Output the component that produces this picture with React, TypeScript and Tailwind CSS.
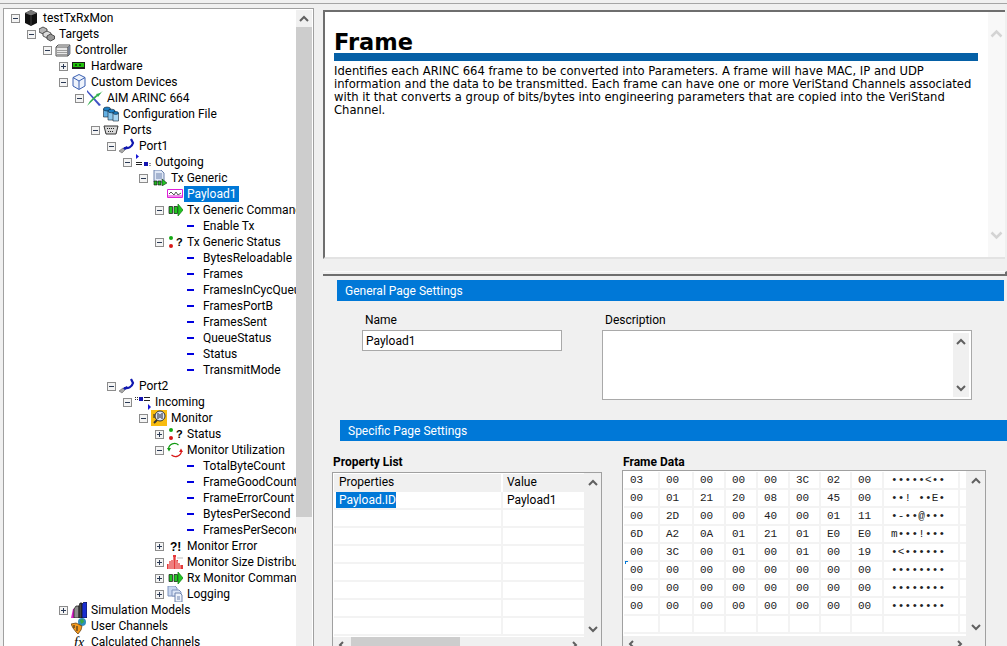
import type { ReactNode } from "react";

type IconName =
  | "root" | "targets" | "controller" | "hardware" | "devices" | "plane" | "config" | "ports" | "port"
  | "outgoing" | "txgeneric" | "payload" | "command" | "dash" | "status" | "incoming" | "monitor"
  | "util" | "error" | "dist" | "logging" | "models" | "users" | "calc";

type Row = { label: string; level: number; icon: IconName; box?: "+" | "-"; selected?: boolean };

const rows: Row[] = [
  { label: "testTxRxMon", level: 0, icon: "root", box: "-" },
  { label: "Targets", level: 1, icon: "targets", box: "-" },
  { label: "Controller", level: 2, icon: "controller", box: "-" },
  { label: "Hardware", level: 3, icon: "hardware", box: "+" },
  { label: "Custom Devices", level: 3, icon: "devices", box: "-" },
  { label: "AIM ARINC 664", level: 4, icon: "plane", box: "-" },
  { label: "Configuration File", level: 5, icon: "config" },
  { label: "Ports", level: 5, icon: "ports", box: "-" },
  { label: "Port1", level: 6, icon: "port", box: "-" },
  { label: "Outgoing", level: 7, icon: "outgoing", box: "-" },
  { label: "Tx Generic", level: 8, icon: "txgeneric", box: "-" },
  { label: "Payload1", level: 9, icon: "payload", selected: true },
  { label: "Tx Generic Command", level: 9, icon: "command", box: "-" },
  { label: "Enable Tx", level: 10, icon: "dash" },
  { label: "Tx Generic Status", level: 9, icon: "status", box: "-" },
  { label: "BytesReloadable", level: 10, icon: "dash" },
  { label: "Frames", level: 10, icon: "dash" },
  { label: "FramesInCycQueue", level: 10, icon: "dash" },
  { label: "FramesPortB", level: 10, icon: "dash" },
  { label: "FramesSent", level: 10, icon: "dash" },
  { label: "QueueStatus", level: 10, icon: "dash" },
  { label: "Status", level: 10, icon: "dash" },
  { label: "TransmitMode", level: 10, icon: "dash" },
  { label: "Port2", level: 6, icon: "port", box: "-" },
  { label: "Incoming", level: 7, icon: "incoming", box: "-" },
  { label: "Monitor", level: 8, icon: "monitor", box: "-" },
  { label: "Status", level: 9, icon: "status", box: "+" },
  { label: "Monitor Utilization", level: 9, icon: "util", box: "-" },
  { label: "TotalByteCount", level: 10, icon: "dash" },
  { label: "FrameGoodCount", level: 10, icon: "dash" },
  { label: "FrameErrorCount", level: 10, icon: "dash" },
  { label: "BytesPerSecond", level: 10, icon: "dash" },
  { label: "FramesPerSecond", level: 10, icon: "dash" },
  { label: "Monitor Error", level: 9, icon: "error", box: "+" },
  { label: "Monitor Size Distribution", level: 9, icon: "dist", box: "+" },
  { label: "Rx Monitor Command", level: 9, icon: "command", box: "+" },
  { label: "Logging", level: 9, icon: "logging", box: "+" },
  { label: "Simulation Models", level: 3, icon: "models", box: "+" },
  { label: "User Channels", level: 3, icon: "users" },
  { label: "Calculated Channels", level: 3, icon: "calc" },
];

const indent: Record<number, string> = {
  0: "pl-[7px]",
  1: "pl-[23px]",
  2: "pl-[39px]",
  3: "pl-[55px]",
  4: "pl-[71px]",
  5: "pl-[87px]",
  6: "pl-[103px]",
  7: "pl-[119px]",
  8: "pl-[135px]",
  9: "pl-[151px]",
  10: "pl-[167px]",
};

const hexRows = [
  ["03", "00", "00", "00", "00", "3C", "02", "00", "•••••<••"],
  ["00", "01", "21", "20", "08", "00", "45", "00", "••! ••E•"],
  ["00", "2D", "00", "00", "40", "00", "01", "11", "•-••@•••"],
  ["6D", "A2", "0A", "01", "21", "01", "E0", "E0", "m•••!•••"],
  ["00", "3C", "00", "01", "00", "01", "00", "19", "•<••••••"],
  ["00", "00", "00", "00", "00", "00", "00", "00", "••••••••"],
  ["00", "00", "00", "00", "00", "00", "00", "00", "••••••••"],
  ["00", "00", "00", "00", "00", "00", "00", "00", "••••••••"],
  ["", "", "", "", "", "", "", "", ""],
];

function TreeIcon({ name }: { name: IconName }) {
  const art: Record<IconName, ReactNode> = {
    root: (
      <>
        <path d="M2 3l6-3 6 3v10l-6 3-6-3z" fill="#111" />
        <path d="M2 3l6-3 6 3-6 2.500z" fill="#777" />
        <path d="M8 6v9" stroke="#444" />
      </>
    ),
    targets: (
      <>
        <path d="M0 3l4-2 4 2v3l-4 2-4-2z" fill="#b5b5b5" stroke="#333" strokeWidth=".8" />
        <path d="M4 7l4-2 4 2v3l-4 2-4-2z" fill="#ddd" stroke="#333" strokeWidth=".8" />
        <path d="M8 10l3.500-2 4 2v3l-4 2-3.500-2z" fill="#999" stroke="#333" strokeWidth=".8" />
      </>
    ),
    controller: (
      <>
        <path d="M1 5h12v9H1z" fill="#e8e8e8" stroke="#555" />
        <path d="M13 5l2-2v9l-2 2z" fill="#8a9ab5" stroke="#555" strokeWidth=".7" />
        <path d="M3 8v5M5 8v5M7 8v5M9 8v5M11 8v5" stroke="#555" strokeDasharray="1 1" />
        <path d="M1 5l2-2h12" fill="none" stroke="#555" />
      </>
    ),
    hardware: (
      <>
        <path d="M1 4h13v7H1z" fill="#1c1c1c" />
        <path d="M2 5h11v4H2z" fill="#22c40c" />
        <path d="M4 6h2v2H4zM8 6h2v2H8z" fill="#0a5a05" />
      </>
    ),
    devices: (
      <>
        <path d="M8 .5l6 3v8.500l-6 3.500-6-3.500V3.500z" fill="#eef3fb" stroke="#3a5fb0" />
        <path d="M2 3.500l6 3.500 6-3.500M8 7v8" fill="none" stroke="#3a5fb0" />
      </>
    ),
    plane: (
      <>
        <path d="M0 0l14 15-2 1L0 2z" fill="#3f51c4" />
        <path d="M16 1L1 15l-1 1 3-5 5-5z" fill="#34b04f" />
        <path d="M9 4l5-1-3 4z" fill="#34b04f" />
      </>
    ),
    config: (
      <>
        <path d="M.500 3h7v8h-7z" fill="#62b0e4" stroke="#123" strokeWidth=".6" />
        <ellipse cx="4" cy="3" rx="3.500" ry="2" fill="#1c7fc4" stroke="#123" strokeWidth=".6" />
        <path d="M5 5h7v9H5z" fill="#8cc7ec" stroke="#123" strokeWidth=".6" />
        <ellipse cx="8.500" cy="5" rx="3.500" ry="1.800" fill="#1c7fc4" stroke="#123" strokeWidth=".6" />
        <path d="M10 7h5.500v8H10z" fill="#a9d6f2" stroke="#123" strokeWidth=".6" />
        <ellipse cx="12.700" cy="7" rx="2.800" ry="1.400" fill="#1c7fc4" stroke="#123" strokeWidth=".6" />
      </>
    ),
    ports: (
      <>
        <path d="M1 4h14l-2 8H3z" fill="#d9d9d9" stroke="#333" />
        <path d="M4 6.500h8M5 9.500h6" stroke="#222" strokeDasharray="1 1" />
      </>
    ),
    port: (
      <>
        <path d="M0 13l4-3 2 2-3 3z" fill="#a8a8a8" stroke="#666" strokeWidth=".6" />
        <path d="M5 10c4 1 8-1 9-5l-2-4" fill="none" stroke="#1018b0" strokeWidth="2.200" />
        <path d="M4 10l4-2 1 2-3 2z" fill="#1018b0" />
      </>
    ),
    outgoing: (
      <>
        <path d="M1 0v5l3-2.500z" fill="#1515d6" />
        <path d="M1 8.500h6M1 10.500h6" stroke="#222" strokeWidth="1" />
        <path d="M9 8h4v4H9z" fill="#1515b0" />
        <path d="M14.500 9h1v1h-1zM14.500 11h1v1h-1z" fill="#333" />
      </>
    ),
    txgeneric: (
      <>
        <path d="M3 0h7l3 3v9H3z" fill="#dfe7f5" stroke="#6c82ad" />
        <path d="M5 4h6M5 6h6M5 8h6" stroke="#6c82ad" />
        <path d="M3 11h3v4H3zM7 11h3v4H7z" fill="#22b322" stroke="#111" strokeWidth=".6" />
        <path d="M11 9l5 4-5 3z" fill="#22c422" stroke="#111" strokeWidth=".5" />
      </>
    ),
    payload: (
      <>
        <path d="M.500 3.500h15v8H.500z" fill="#fff" stroke="#e020d8" />
        <path d="M2 8l2-2 3 3 2-3 2 3 3-2" fill="none" stroke="#555" />
        <path d="M1 10h14" stroke="#e020d8" />
      </>
    ),
    command: (
      <>
        <path d="M2 4.500h3.500v7H2zM7 4.500h3.500v7H7z" fill="#22c422" stroke="#111" strokeWidth=".7" />
        <path d="M11 2l5 6-5 6z" fill="#22c422" stroke="#0a7a0a" strokeWidth=".7" />
      </>
    ),
    dash: <path d="M4 7h7v2H4z" fill="#0000e0" />,
    status: (
      <>
        <circle cx="4" cy="4" r="2" fill="#14a814" />
        <circle cx="4" cy="12" r="2" fill="#d81818" />
        <text x="9" y="12" fontSize="11" fontWeight="700" fontFamily="Liberation Sans" fill="#000">?</text>
      </>
    ),
    incoming: (
      <>
        <path d="M0 3h1v1H0zM2 3h1v1H2zM0 5h1v1H0zM2 5h1v1H2z" fill="#333" />
        <path d="M4 3h4v4H4z" fill="#1515b0" />
        <path d="M9 3.500h6M9 6.500h6" stroke="#222" />
        <path d="M13 10v6l-3-3z" fill="#1515d6" transform="matrix(-1 0 0 1 26 0)" />
      </>
    ),
    monitor: (
      <>
        <path d="M0 0h16v16H0z" fill="#f8bc10" />
        <circle cx="9" cy="6" r="5" fill="#dce6f5" stroke="#333" />
        <path d="M7 3v6M9 4v4M11 3v6M3 4v4" stroke="#223" />
        <path d="M6 10l-3 3" stroke="#333" strokeWidth="2" />
      </>
    ),
    util: (
      <>
        <path d="M1.500 7a6 6 0 0 1 10-4" fill="none" stroke="#119a11" strokeWidth="1.200" />
        <path d="M14.500 9a6 6 0 0 1-10 4" fill="none" stroke="#d81818" strokeWidth="1.200" />
        <path d="M0 6h4L2 9.500z" fill="#119a11" />
        <path d="M12 10h4l-2-3.500z" fill="#d81818" />
      </>
    ),
    error: (
      <text x="3" y="13" fontSize="12" fontWeight="700" fontFamily="Liberation Sans" fill="#000">?!</text>
    ),
    dist: (
      <>
        <path d="M0 15V10h2V7h2v-1h2V1h3v5h2v3h2v2h3v4z" fill="#e53a3a" />
        <path d="M2 7v8M4 6v9M6 3v12M9 3v12M11 7v8M13 9v6" stroke="#fff" strokeWidth=".7" />
        <path d="M10 4h6" stroke="#bbb" />
      </>
    ),
    logging: (
      <>
        <path d="M1 0h7l2 2v8H1z" fill="#c7d6ef" stroke="#7e93bd" />
        <path d="M5 4h7l2 2v4H5z" fill="#dbe5f6" stroke="#7e93bd" />
        <path d="M8 7h5l2 2v7H8z" fill="#eef3fb" stroke="#6c82ad" />
        <path d="M10 11h3M10 13h3" stroke="#6c82ad" />
      </>
    ),
    models: (
      <>
        <path d="M0 16l2-9 3-1-2 10z" fill="#d820c8" />
        <path d="M3 7l2-3h3v12H3z" fill="#8e8e8e" stroke="#111" strokeWidth=".7" />
        <path d="M8 4l1-3h2v15H8z" fill="#444" stroke="#111" strokeWidth=".7" />
        <path d="M11 2l2-2h3v16h-5z" fill="#1a2ecf" stroke="#111" strokeWidth=".7" />
      </>
    ),
    users: (
      <>
        <circle cx="11" cy="4" r="4" fill="#2f8fbd" />
        <path d="M9 2l3-1 1 3-3 2z" fill="#39a845" />
        <path d="M0 6l5-1 6 3-1 4-3 4-2-2-3-4z" fill="#f49a1f" stroke="#5a3405" strokeWidth=".7" />
        <path d="M3 7v3M6 8v5" stroke="#222" />
      </>
    ),
    calc: (
      <text x="3" y="13" fontSize="14" fontStyle="italic" fontFamily="Liberation Serif" fill="#000">fx</text>
    ),
  };
  return (
    <svg width="16" height="16" viewBox="0 0 16 16" className="shrink-0">
      {art[name]}
    </svg>
  );
}

function ExpandBox({ kind }: { kind?: "+" | "-" }) {
  if (!kind) return <span className="w-[9px] shrink-0" />;
  return (
    <span className="relative w-[9px] h-[9px] shrink-0 border border-[#8c8c8c] bg-[#f4f4f4]">
      <span className="absolute left-[1px] top-[3px] w-[5px] h-[1px] bg-[#2b3a55]" />
      {kind === "+" && <span className="absolute left-[3px] top-[1px] w-[1px] h-[5px] bg-[#2b3a55]" />}
    </span>
  );
}

function TreeRow({ row }: { row: Row }) {
  return (
    <div className={`flex items-center h-4 shrink-0 gap-[3px] whitespace-nowrap ${indent[row.level]}`}>
      <ExpandBox kind={row.box} />
      <TreeIcon name={row.icon} />
      <span className={`-ml-[2px] px-[3px] h-4 leading-[17px] ${row.selected ? "bg-[#0078d7] text-white" : "text-black"}`}>
        {row.label}
      </span>
    </div>
  );
}

function Chevron({ dir, className = "" }: { dir: "up" | "down" | "left" | "right"; className?: string }) {
  const d = {
    up: "M1 6l4-4 4 4",
    down: "M1 2l4 4 4-4",
    left: "M6 1L3 4l3 3",
    right: "M3 1l3 3-3 3",
  }[dir];
  return (
    <svg width="10" height="8" viewBox="0 0 10 8" className={className}>
      <path d={d} fill="none" stroke="currentColor" strokeWidth="2" />
    </svg>
  );
}

function SectionBar({ title, className }: { title: string; className: string }) {
  return (
    <div className={`h-[21px] shrink-0 bg-[#0078d7] text-white leading-[23px] pl-2 ${className}`}>{title}</div>
  );
}

export default function App() {
  return (
    <div className="w-[1007px] h-[646px] overflow-hidden bg-[#f0f0f0] font-['Roboto',sans-serif] text-[12px]">
      <div className="h-[4px] border-b border-[#a5a5a5]" />
      <div className="flex h-[642px]">
        {/* tree pane */}
        <div className="mt-[4px] ml-[3px] w-[311px] shrink-0 flex border border-[#a0a0a0] border-b-0 bg-white pt-[1px] overflow-hidden">
          <div className="w-[292px] shrink-0 flex flex-col overflow-hidden">
            {rows.map((row, i) => (
              <TreeRow key={i} row={row} />
            ))}
          </div>
          <div className="w-[16px] shrink-0 bg-[#f0f0f0] flex flex-col">
            <div className="h-[17px] flex items-center justify-center text-[#606060]">
              <Chevron dir="up" />
            </div>
            <div className="h-[490px] bg-[#cdcdcd]" />
          </div>
        </div>

        {/* right side */}
        <div className="ml-[9px] mt-[6px] flex-1 min-w-0 flex flex-col">
          <div className="h-[249px] w-[682px] shrink-0 flex border-t-2 border-l-2 border-[#6e6e6e] border-b-2 border-b-[#e3e3e3] bg-white">
            <div className="w-[663px] shrink-0 pl-[9px] pt-[20px]">
              <h1 className="font-['DejaVu_Sans',sans-serif] font-bold text-[22.5px] leading-[21px] text-black">Frame</h1>
              <div className="h-2 w-[644px] bg-[#0560a6]" />
              <p className="font-['DejaVu_Sans',sans-serif] text-[11.6px] leading-[13px] whitespace-nowrap mt-[4px] text-black">
                Identifies each ARINC 664 frame to be converted into Parameters. A frame will have MAC, IP and UDP
                <br />
                information and the data to be transmitted. Each frame can have one or more VeriStand Channels associated
                <br />
                with it that converts a group of bits/bytes into engineering parameters that are copied into the VeriStand
                <br />
                Channel.
              </p>
            </div>
            <div className="w-[17px] shrink-0 bg-[#f8f8f8] flex flex-col justify-between items-center pt-[17px] pb-[17px] text-[#d4d4d4]">
              <Chevron dir="up" className="w-[13px] h-[10px]" />
              <Chevron dir="down" className="w-[13px] h-[10px]" />
            </div>
          </div>

          <div className="h-[5px] mt-[12px] shrink-0 border-b-2 border-r-2 border-[#6e6e6e] border-t border-t-[#fafafa] w-[684px]" />

          <SectionBar title="General Page Settings" className="mt-[4px] ml-[14px] w-[667px]" />

          <div className="flex mt-[11px] ml-[39px] h-[88px] shrink-0">
            <div className="w-[240px] shrink-0">
              <label className="block ml-[3px] leading-[16px] text-black">Name</label>
              <div className="mt-[2px] w-[200px] h-[21px] border border-[#a9a9a9] bg-white pl-[3px] leading-[20px] text-black">
                Payload1
              </div>
            </div>
            <div>
              <label className="block ml-[3px] leading-[16px] text-black">Description</label>
              <div className="mt-[2px] w-[370px] h-[70px] border border-[#a9a9a9] bg-white flex justify-end py-[2px] pr-[2px]">
                <div className="w-[16px] bg-[#f0f0f0] flex flex-col justify-between items-center py-[5px] text-[#606060]">
                  <Chevron dir="up" />
                  <Chevron dir="down" />
                </div>
              </div>
            </div>
          </div>

          <SectionBar title="Specific Page Settings" className="mt-[20px] ml-[17px] w-[667px]" />

          <div className="flex ml-[9px] mt-[13px]">
            {/* property list */}
            <div className="w-[290px] shrink-0">
              <div className="font-bold leading-[16px] pl-[1px] text-black">Property List</div>
              <div className="mt-[2px] w-[270px] h-[190px] border border-[#a0a0a0] bg-[#f0f0f0] flex flex-col">
                <div className="flex h-[164px] shrink-0">
                  <div className="w-[251px] shrink-0 pt-[1px] pl-[1px] bg-white overflow-hidden">
                    <div className="flex h-[18px] bg-[#f0f0f0] leading-[17px] text-black">
                      <span className="w-[169px] pl-[5px] border-r-2 border-white">Properties</span>
                      <span className="pl-[4px]">Value</span>
                    </div>
                    <div className="flex h-[18px] border-b-2 border-[#f3f3f3]">
                      <span className="w-[169px] pl-[2px] border-r-2 border-[#f3f3f3]">
                        <span className="block w-[60px] h-4 pl-[3px] leading-[17px] bg-[#0078d7] text-white">Payload.ID</span>
                      </span>
                      <span className="pl-[4px] leading-[17px] text-black">Payload1</span>
                    </div>
                    {[0, 1, 2, 3, 4, 5, 6].map((i) => (
                      <div key={i} className="flex h-[18px] border-b-2 border-[#f3f3f3]">
                        <span className="w-[169px] border-r-2 border-[#f3f3f3]" />
                      </div>
                    ))}
                  </div>
                  <div className="flex-1 flex flex-col items-center justify-between pt-[6px] pb-[4px] text-[#606060]">
                    <Chevron dir="up" />
                    <Chevron dir="down" />
                  </div>
                </div>
                <div className="flex w-[251px] h-[16px] text-[#606060]">
                  <div className="w-[18px] flex items-center justify-center">
                    <Chevron dir="left" />
                  </div>
                  <div className="w-[109px] bg-[#cdcdcd]" />
                  <div className="flex-1" />
                  <div className="w-[18px] flex items-center justify-center">
                    <Chevron dir="right" />
                  </div>
                </div>
              </div>
            </div>

            {/* frame data */}
            <div className="w-[364px] shrink-0">
              <div className="font-bold leading-[16px] pl-[1px] text-black">Frame Data</div>
              <div className="relative w-[364px] h-[190px] border border-[#a0a0a0] bg-[#f0f0f0] flex flex-col">
                <div className="flex h-[165px] shrink-0">
                  <div className="w-[343px] shrink-0 pl-[1px] pt-[1px] bg-white overflow-hidden font-['Liberation_Mono',monospace] text-[11px] text-[#222]">
                    {hexRows.map((cells, r) => (
                      <div
                        key={r}
                        className="grid grid-cols-[36px_34px_32px_32px_32px_31px_31px_32px_76px_7px] h-[18px] border-b-2 border-[#f3f3f3] leading-[16px]"
                      >
                        {cells.map((c, i) => (
                          <span
                            key={i}
                            className={`border-r-2 border-[#f3f3f3] whitespace-pre ${i === 8 ? "pl-[7px] tracking-[0.2px]" : "pl-[6px]"}`}
                          >
                            {c}
                          </span>
                        ))}
                        <span />
                      </div>
                    ))}
                  </div>
                  <div className="flex-1 flex flex-col items-center justify-between pt-[6px] pb-[5px] text-[#606060]">
                    <Chevron dir="up" />
                    <Chevron dir="down" />
                  </div>
                </div>
                <div className="flex w-[343px] h-[16px] text-[#606060]">
                  <div className="w-[18px] flex items-center justify-center">
                    <Chevron dir="left" />
                  </div>
                  <div className="flex-1" />
                  <div className="w-[12px] flex items-center justify-center">
                    <Chevron dir="right" />
                  </div>
                </div>
                <div className="absolute left-[2px] top-[90px] w-[3px] h-[3px] border-l border-t border-[#0078d7]" />
              </div>
            </div>
          </div>
        </div>
      </div>
    </div>
  );
}
